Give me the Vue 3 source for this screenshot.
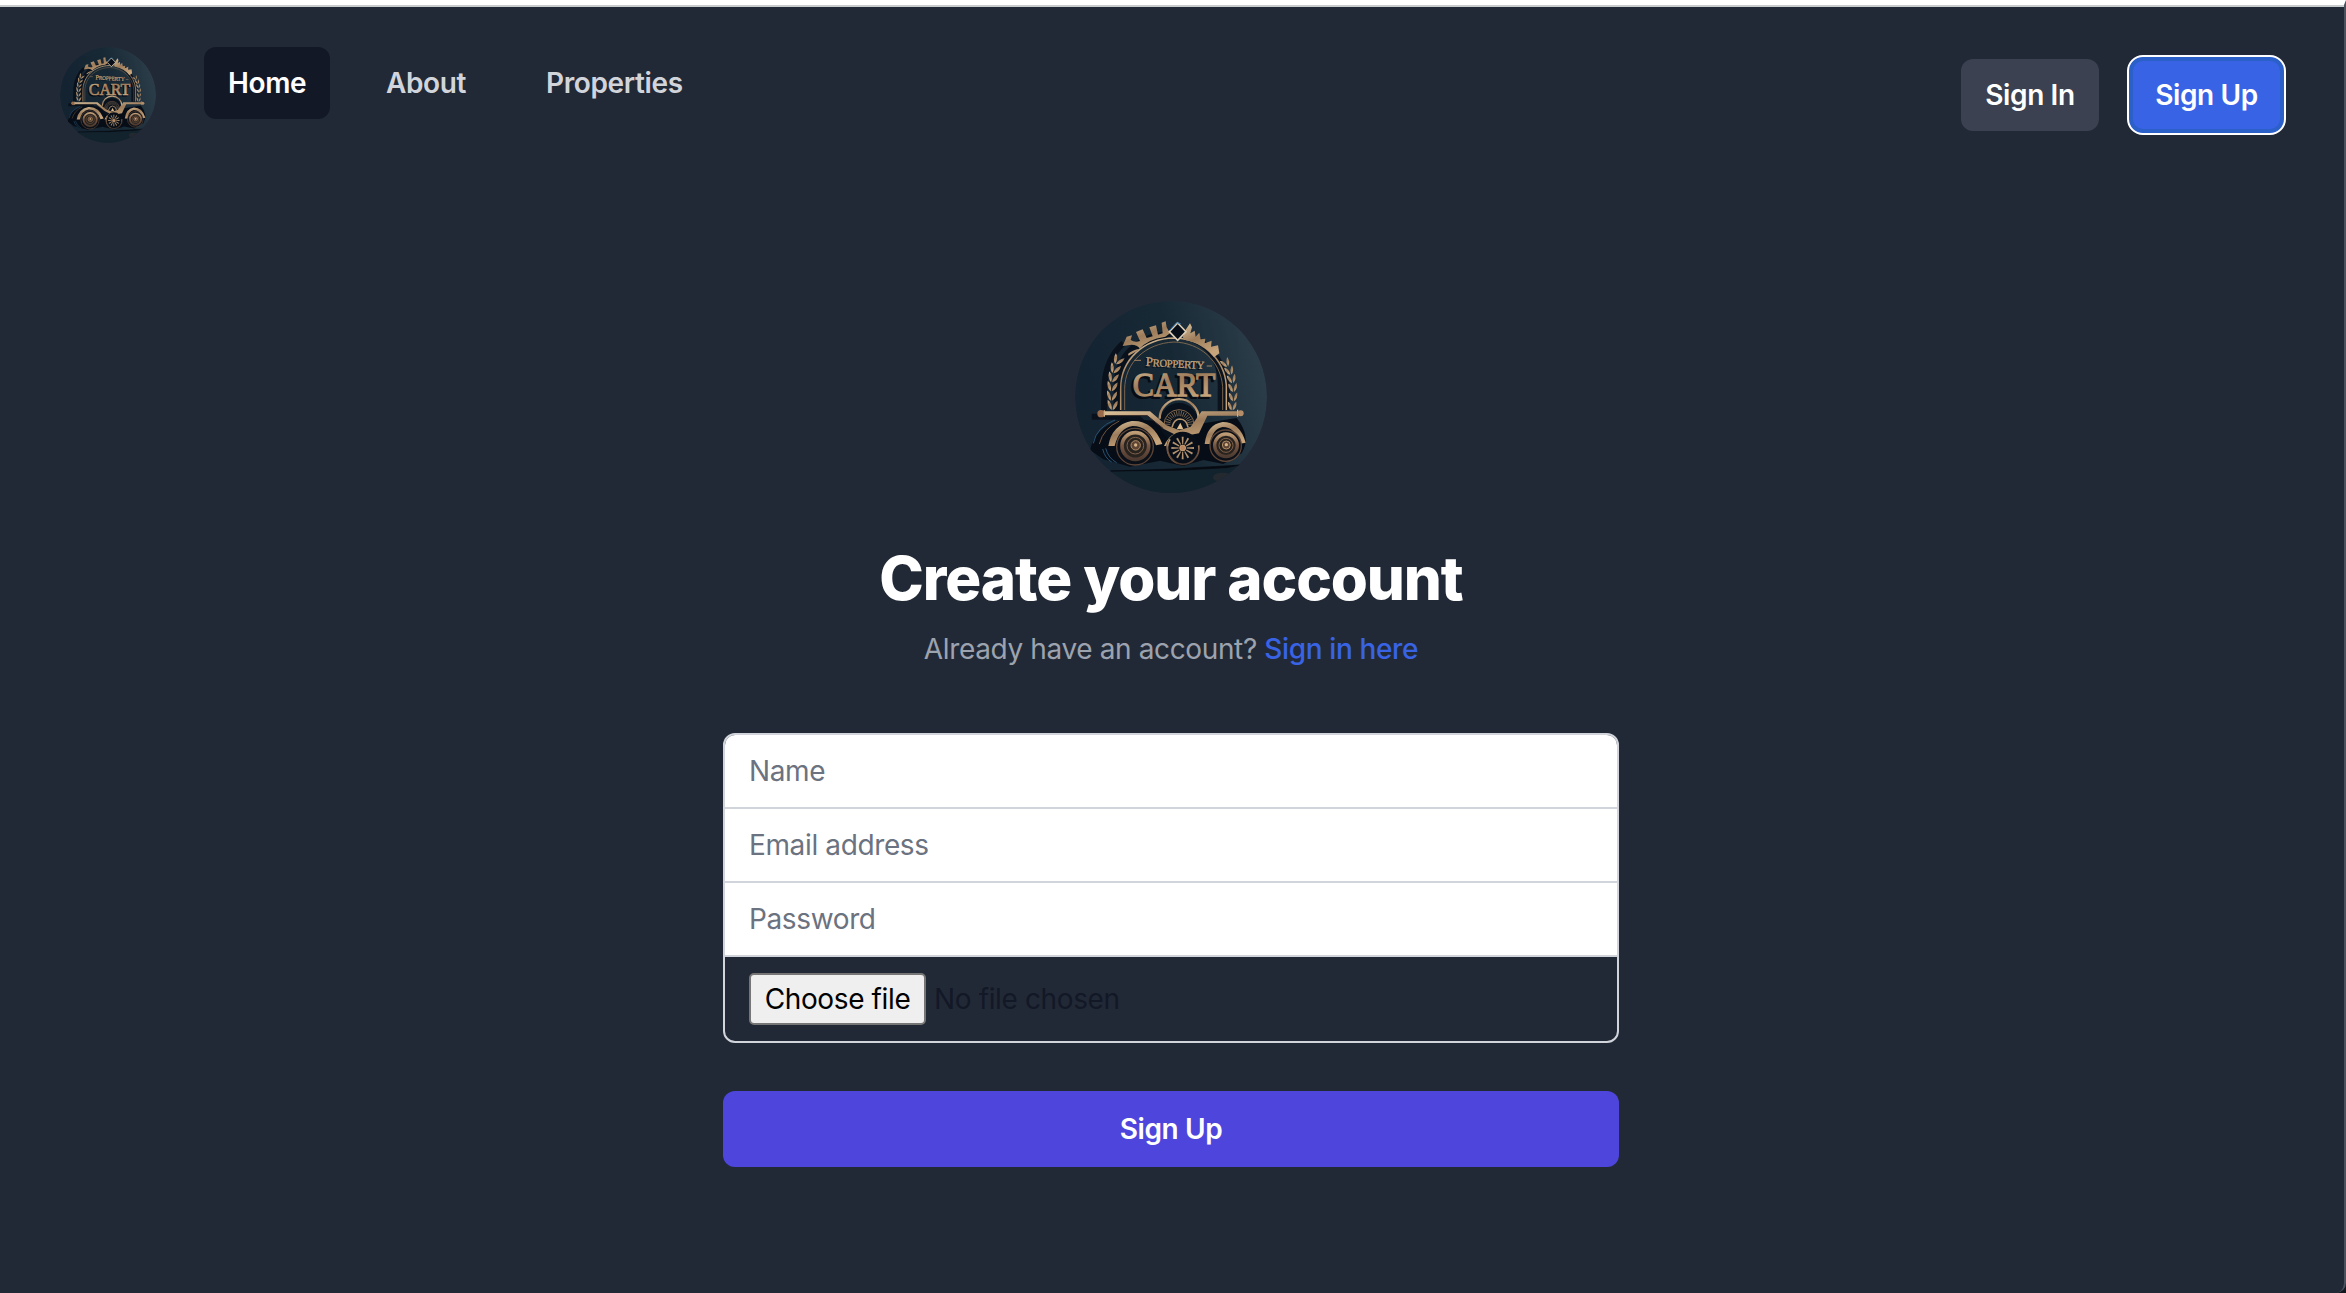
<script setup>
import { ref } from 'vue'

const links = ['Home', 'About', 'Properties']
const active = ref('Home')
const fields = [
  { label: 'Name', type: 'text' },
  { label: 'Email address', type: 'email' },
  { label: 'Password', type: 'password' },
]
// x, y and rotation of each laurel leaf pair along both branches
const leftLeaves = [[156, 342, 0], [154, 314, 2], [155, 286, 6], [158, 259, 12], [164, 232, 18], [174, 206, 26]]
const rightLeaves = [[516, 345, 0], [519, 318, -2], [518, 290, -6], [514, 264, -12], [507, 239, -18], [495, 216, -28]]
const spokes = Array.from({ length: 12 }, (_, i) => i * 30)
const fan = Array.from({ length: 17 }, (_, i) => -88 + i * 11)
</script>

<template>
  <div class="page">
    <svg class="defs" width="0" height="0" aria-hidden="true">
      <defs>
        <linearGradient id="disc" x1="0" y1="0.6" x2="1" y2="0.35">
          <stop offset="0" stop-color="#142331" />
          <stop offset="0.55" stop-color="#182936" />
          <stop offset="1" stop-color="#2c3e49" />
        </linearGradient>
        <linearGradient id="gold" x1="0" y1="0" x2="0.5" y2="1">
          <stop offset="0" stop-color="#ddc39c" />
          <stop offset="0.5" stop-color="#9d7c5b" />
          <stop offset="1" stop-color="#c6a57c" />
        </linearGradient>
        <linearGradient id="bronze" x1="0" y1="0" x2="0" y2="1">
          <stop offset="0" stop-color="#c09d76" />
          <stop offset="0.5" stop-color="#745541" />
          <stop offset="1" stop-color="#4d3a30" />
        </linearGradient>
        <clipPath id="round"><circle cx="333" cy="321" r="288" /></clipPath>
        <symbol id="logo" viewBox="45 33 576 576">
          <g clip-path="url(#round)">
            <circle cx="333" cy="321" r="288" fill="url(#disc)" />
            <path d="M45 540 L150 545 L560 526 L640 526 V620 H45Z" fill="#13232e" />
            <path d="M152 543 L340 537 L540 525 L500 533 L350 541Z" fill="#080b12" stroke="#080b12" stroke-width="2" />
            <ellipse cx="487" cy="562" rx="28" ry="14" fill="#33302f" opacity=".5" />
            <!-- cast shadow -->
            <g fill="none" stroke="#070d17" opacity=".8">
              <path d="M172 362 V290 C172 190 245 135 338 135 C425 136 482 190 484 280 V362" stroke-width="22" />
              <path d="M132 360 L134 280 Q140 205 190 160" stroke-width="18" />
              <path d="M500 360 L502 290 Q495 240 470 200" stroke-width="16" />
              <path d="M95 380 H230 L290 440" stroke-width="18" />
            </g>
            <path d="M90 480 Q105 410 190 386 L290 392 L340 420 L430 400 L530 384 Q575 440 545 490 L490 522 L430 510 L370 528 L300 512 L210 530 L130 508Z" fill="#070d17" />
            <!-- arch -->
            <g fill="none" stroke="url(#gold)">
              <path d="M182 360 V296 C182 210 250 146 342 144 C425 145 492 205 499 285 V360" stroke-width="4.5" />
              <path d="M194 360 V298 C194 218 256 160 342 156 C420 158 482 212 488 290 V360" stroke-width="2.5" stroke="#8f7253" />
            </g>
            <!-- crown -->
            <g fill="url(#gold)">
              <path d="M204 192 Q216 180 240 176 Q232 164 214 164 L188 168 L200 140 L216 136 L212 150 Q224 158 240 153 L228 126 L248 118 L260 144 L278 139 L268 112 L288 106 L294 134 L308 130 L305 98 L317 94 L320 112 L330 130 L316 140 Q262 146 232 182 L206 197Z" />
              <path d="M368 142 L378 118 L390 100 L396 112 L391 130 L404 122 L407 140 L418 128 L422 148 L436 146 L434 160 L455 152 L453 170 L474 166 L478 190 L462 202 Q430 158 378 151Z" />
            </g>
            <path d="M353 99 L378 125 L353 151 L328 125Z" fill="#080e17" stroke="#d9cdb8" stroke-width="5" />
            <path d="M330 120 L350 98 L362 101" fill="none" stroke="#3d7cae" stroke-width="3" />
            <!-- laurels -->
            <g fill="url(#gold)">
              <g v-for="(l, i) in leftLeaves" :key="'l' + i" :transform="`translate(${l[0]} ${l[1]}) rotate(${l[2]})`">
                <path d="M-1 18 Q-15 8 -13 -12 Q1 -4 -1 18Z" />
                <path d="M2 18 Q1 0 17 -10 Q18 10 2 18Z" />
              </g>
              <g v-for="(l, i) in rightLeaves" :key="'r' + i" :transform="`translate(${l[0]} ${l[1]}) rotate(${l[2]})`">
                <path d="M-1 16 Q-14 8 -12 -10 Q1 -4 -1 16Z" />
                <path d="M2 16 Q1 0 13 -10 Q15 8 2 16Z" />
              </g>
            </g>
            <!-- lettering -->
            <path d="M223 211 H243 M440 228 H456" stroke="#a08262" stroke-width="3" />
            <g class="mark" transform="rotate(3 340 220)">
              <text x="253" y="236" textLength="176" fill="#060b14" font-size="34"><tspan font-size="41">P</tspan>ROPPERTY</text>
              <text x="257" y="232" textLength="176" fill="#c2a27a" stroke="#c2a27a" stroke-width="1" font-size="32"><tspan font-size="39">P</tspan>ROPPERTY</text>
            </g>
            <g class="mark">
              <text x="212" y="325" textLength="248" lengthAdjust="spacingAndGlyphs" font-size="104" fill="#060b14" stroke="#060b14" stroke-width="6">CART</text>
              <text x="218" y="319" textLength="248" lengthAdjust="spacingAndGlyphs" font-size="104" fill="url(#gold)" stroke="url(#gold)" stroke-width="4">CART</text>
            </g>
            <!-- centre fan wheel -->
            <circle cx="357" cy="397" r="58" fill="#08111c" />
            <path d="M299 386 A58 58 0 0 1 416 386" fill="none" stroke="url(#gold)" stroke-width="7" />
            <path d="M312 404 A45 45 0 1 1 402 404" fill="none" stroke="#846749" stroke-width="3" />
            <g stroke="#9c8060" stroke-width="2">
              <path v-for="a in fan" :key="a" d="M357 378 V362" :transform="`rotate(${a} 357 404)`" />
            </g>
            <path d="M336 412 Q342 387 360 387 Q380 388 384 412" fill="none" stroke="#b4936c" stroke-width="5" />
            <path d="M361 398 L370 418 H350Z" fill="#dfbd8d" />
            <!-- chassis -->
            <path d="M132 364 H270 L318 405 L358 421 L392 410 L425 364 H533 V377 H442 L417 430 L385 436 Q350 428 330 449 Q324 466 338 468 H312 Q325 440 342 432 L310 416 L262 377 H132Z" fill="url(#gold)" />
            <path d="M132 377 H262 L310 416" fill="none" stroke="#2a211f" stroke-width="3" />
            <circle cx="123" cy="371" r="11" fill="#9a6b4b" />
            <path d="M133 361 V380 M533 359 V380" stroke="#d0b183" stroke-width="4" />
            <circle cx="542" cy="370" r="9" fill="#b58e69" />
            <!-- blue edge light -->
            <g fill="none" stroke="#275274" stroke-width="3">
              <path d="M100 460 Q110 410 165 390" />
              <path d="M118 462 Q130 415 178 393" stroke="#6f543f" />
              <path d="M128 477 Q135 505 155 516 M137 475 Q145 505 170 518" />
            </g>
            <!-- mudguards -->
            <path d="M145 468 Q155 405 215 393 Q278 389 307 462 L288 466 Q267 408 218 408 Q177 414 164 468Z" fill="url(#gold)" />
            <path d="M434 462 Q440 404 488 396 Q540 396 557 458 L540 461 Q526 411 488 411 Q456 417 451 462Z" fill="url(#gold)" />
            <!-- wheels -->
            <g fill="none">
              <circle cx="225" cy="470" r="55" fill="#0a0f18" stroke="#5c4537" stroke-width="4" />
              <circle cx="226" cy="468" r="40" fill="#29231f" stroke="url(#bronze)" stroke-width="11" />
              <circle cx="226" cy="467" r="25" stroke="#80614a" stroke-width="3" />
              <circle cx="227" cy="466" r="14" fill="#5d4434" stroke="#b08c66" stroke-width="3" />
              <circle cx="227" cy="465" r="5" fill="#d6b386" />
              <circle cx="497" cy="467" r="47" fill="#0a0f18" stroke="#5c4537" stroke-width="4" />
              <circle cx="498" cy="466" r="34" fill="#29231f" stroke="url(#bronze)" stroke-width="10" />
              <circle cx="498" cy="466" r="21" stroke="#80614a" stroke-width="3" />
              <circle cx="499" cy="465" r="12" fill="#5d4434" stroke="#b08c66" stroke-width="3" />
              <circle cx="499" cy="464" r="5" fill="#d6b386" />
              <circle cx="368" cy="474" r="49" fill="#080e17" />
              <path d="M330 448 A49 49 0 0 0 368 523 A49 49 0 0 0 416 466" stroke="url(#bronze)" stroke-width="5" />
              <path d="M320 468 Q322 510 350 520" stroke="#6f543f" stroke-width="3" />
            </g>
            <g fill="#b39370">
              <path v-for="a in spokes" :key="a" d="M366.500 462 L365 440 H371 L369.500 462Z" :transform="`rotate(${a} 368 474)`" />
            </g>
            <circle cx="368" cy="474" r="9" fill="#b98660" stroke="#dcb98b" stroke-width="2" />
          </g>
        </symbol>
      </defs>
    </svg>

    <header class="nav">
      <svg class="brand"><use href="#logo" /></svg>
      <nav class="links">
        <a v-for="l in links" :key="l" :class="['link', { active: l === active }]" @click="active = l">{{ l }}</a>
      </nav>
      <div class="actions">
        <button class="btn signin">Sign In</button>
        <button class="btn signup">Sign Up</button>
      </div>
    </header>

    <main class="main">
      <svg class="hero"><use href="#logo" /></svg>
      <h1>Create your account</h1>
      <p class="sub">Already have an account? <a>Sign in here</a></p>
      <form class="form" @submit.prevent>
        <div class="group">
          <input v-for="f in fields" :key="f.label" :type="f.type" :placeholder="f.label" />
          <div class="file">
            <button type="button" class="choose">Choose file</button>
            <span class="none">No file chosen</span>
          </div>
        </div>
        <button class="submit">Sign Up</button>
      </form>
    </main>
  </div>
</template>

<style>
body { background: #14181f; }
</style>

<style scoped>
* { box-sizing: border-box; }
.page {
  height: 1293px;
  overflow: hidden;
  background: #222936;
  border-top: 5px solid #fff;
  border-right: 2px solid #4b525e;
  border-bottom-right-radius: 10px;
  box-shadow: inset 0 2px #c9cccd;
  font: 400 28px/40px Inter, "Liberation Sans", sans-serif;
  letter-spacing: -0.37px;
}
.defs { position: absolute; }
.mark { font-family: "Liberation Serif", serif; font-weight: 400; letter-spacing: 0; }
.nav {
  display: flex;
  align-items: flex-start;
  height: 138px;
  padding: 42px 58px 0 60px;
}
.brand { width: 96px; height: 96px; flex: none; }
.links { display: flex; gap: 32px; margin-left: 48px; }
.link {
  height: 72px;
  padding: 16px 24px;
  border-radius: 12px;
  font-weight: 560;
  color: #d1d5db;
}
.link:nth-child(1) { width: 126px; }
.link:nth-child(2) { width: 128px; }
.active { background: #121826; color: #fff; }
.actions {
  display: flex;
  align-items: center;
  gap: 28px;
  height: 80px;
  margin: 8px 0 0 auto;
}
button { font: inherit; letter-spacing: inherit; border: 0; padding: 0; }
.btn { height: 72px; border-radius: 12px; font-weight: 560; color: #fff; }
.signin { width: 138px; background: #3b4150; }
.signup {
  width: 159px;
  height: 80px;
  background: #3963e5;
  border: 2px solid #fff;
  border-radius: 16px;
  box-shadow: inset 0 0 0 4px #2b60c9;
}
.main {
  width: 896px;
  margin: 158px 0 0 723px;
  display: flex;
  flex-direction: column;
  align-items: center;
}
.hero { width: 192px; height: 192px; }
h1 {
  margin: 49px 0 0;
  font-size: 60px;
  line-height: 72px;
  font-weight: 800;
  letter-spacing: -1.1px;
  color: #fff;
  white-space: nowrap;
}
.sub { margin: 15px 0 0; color: #9ca3af; white-space: nowrap; }
.sub a { color: #3963e5; font-weight: 500; }
.form { width: 896px; margin-top: 64px; }
.group {
  border: 2px solid #d1d5db;
  border-radius: 12px;
  overflow: hidden;
}
input {
  display: block;
  width: 100%;
  height: 74px;
  padding: 0 24px;
  border: 0;
  border-bottom: 2px solid #d1d5db;
  border-radius: 0;
  outline: 0;
  background: #fff;
  font: inherit;
  letter-spacing: inherit;
}
input::placeholder { color: #6b7280; opacity: 1; }
.file { display: flex; align-items: center; height: 84px; padding: 0 24px; }
.choose {
  width: 177px;
  height: 52px;
  border: 2px solid #767676;
  border-radius: 5px;
  background: #efefef;
  color: #000;
}
.none { margin-left: 8px; color: #121826; }
.submit {
  width: 100%;
  height: 76px;
  margin-top: 48px;
  border-radius: 12px;
  background: #4e46dc;
  color: #fff;
  font-weight: 560;
}
</style>
